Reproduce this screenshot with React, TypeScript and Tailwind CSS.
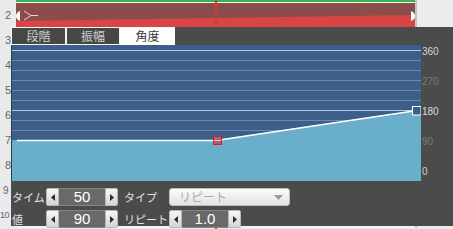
import React from 'react';

const rows = ['3', '4', '5', '6', '7', '8', '9', '10'];
const axis = [
  { label: '360', color: 'text-[#d4d4d4]' },
  { label: '270', color: 'text-[#7a7a7a]' },
  { label: '180', color: 'text-[#dcdcdc]' },
  { label: '90', color: 'text-[#7a7a7a]' },
  { label: '0', color: 'text-[#cfcfcf]' },
];

function Arrow({ dir }: { dir: 'left' | 'right' }) {
  return (
    <svg width="4" height="7" viewBox="0 0 4 7">
      <path d={dir === 'left' ? 'M4 0 L0 3.5 L4 7Z' : 'M0 0 L4 3.5 L0 7Z'} fill="#2b2b2b" />
    </svg>
  );
}

function Spinner({ value }: { value: string }) {
  return (
    <div className="flex h-[18px] shrink-0">
      <div className="w-[13px] flex items-center justify-center rounded-l-[2px] border border-[#b8b8b8] bg-linear-to-b from-[#f7f7f7] to-[#d4d4d4]">
        <Arrow dir="left" />
      </div>
      <div className="w-[46px] flex items-center justify-center border-y border-[#858585] bg-[#696969] text-[15px] text-white font-['Liberation_Sans',sans-serif]">
        {value}
      </div>
      <div className="w-[13px] flex items-center justify-center rounded-r-[2px] border border-[#b8b8b8] bg-linear-to-b from-[#f7f7f7] to-[#d4d4d4]">
        <Arrow dir="right" />
      </div>
    </div>
  );
}

function Chart() {
  const lines = [5, 15, 25, 35, 45, 55, 65, 75, 85];
  return (
    <svg width="410" height="136" viewBox="0 0 410 136" className="block shrink-0">
      <rect x="0" y="0" width="410" height="136" fill="#3d5e89" />
      {lines.map((y) => (
        <line
          key={y}
          x1="0"
          x2="410"
          y1={y + 0.5}
          y2={y + 0.5}
          stroke={y === 5 || y === 65 ? '#b9c5d5' : '#6c88aa'}
          strokeWidth="1"
        />
      ))}
      <polygon points="0,95 205,95 406,65 410,65 410,136 0,136" fill="#6aafca" />
      <polyline points="6,95.5 205,95.5 406,65.5" fill="none" stroke="#ffffff" strokeWidth="1.3" />
      <rect x="202.5" y="91.5" width="8" height="8" fill="#a46478" stroke="#e01b1b" strokeWidth="1" />
      <line x1="203" x2="210" y1="95.5" y2="95.5" stroke="#e6c8d0" strokeWidth="1" />
      <rect x="401.5" y="61.5" width="8.5" height="8.5" fill="#3d5e89" stroke="#ffffff" strokeWidth="1" />
      <rect x="0" y="0" width="1" height="136" fill="#2c3e55" />
    </svg>
  );
}

function Panel() {
  return (
    <div className="absolute left-[11px] top-[27px] w-[442px] h-[199px] bg-[#4b4b4b] flex flex-col font-['Noto_Sans_CJK_JP','Noto_Sans',sans-serif] z-10">
      <div className="h-[18px] flex">
        <div className="flex gap-[2px] bg-[#f4f4f4] pl-px pt-px">
          <div className="w-[53px] h-[16px] bg-[#474747] text-[#d0d0d0] text-[12px] leading-[16px] text-center">段階</div>
          <div className="w-[52px] h-[16px] bg-[#474747] text-[#d0d0d0] text-[12px] leading-[16px] text-center">振幅</div>
          <div className="w-[55px] h-[17px] -ml-[1px] bg-white text-[#3a3a3a] text-[12px] leading-[16px] text-center">角度</div>
        </div>
      </div>
      <div className="flex">
        <Chart />
        <div className="flex flex-col -mt-[9px] pl-px">
          {axis.map((a) => (
            <div key={a.label} className={`h-[30px] flex items-center text-[10px] font-['Liberation_Sans',sans-serif] ${a.color}`}>
              {a.label}
            </div>
          ))}
        </div>
      </div>
      <div className="flex flex-col gap-[4px] pt-[2px] text-[11px] text-[#e2e2e2] whitespace-nowrap">
        <div className="flex items-center h-[18px]">
          <div className="w-[35px] shrink-0 pl-px">タイム</div>
          <Spinner value="50" />
          <div className="w-[51px] shrink-0 pl-[6px]">タイプ</div>
          <div className="w-[121px] shrink-0 h-[18px] flex items-center justify-between rounded-[3px] border border-[#bdbdbd] bg-linear-to-b from-[#fbfbfb] to-[#e2e2e2] pl-[9px] pr-[6px]">
            <span className="text-[#a9a9a9] text-[12px]">リピート</span>
            <svg width="9" height="5" viewBox="0 0 9 5">
              <path d="M0 0 L9 0 L4.5 5Z" fill="#9a9a9a" />
            </svg>
          </div>
        </div>
        <div className="flex items-center h-[18px]">
          <div className="w-[35px] shrink-0 pl-px">値</div>
          <Spinner value="90" />
          <div className="w-[51px] shrink-0 pl-[6px]">リピート</div>
          <Spinner value="1.0" />
        </div>
      </div>
    </div>
  );
}

function Track() {
  return (
    <svg width="399" height="24" viewBox="0 0 399 24" className="block">
      <rect x="0" y="0" width="399" height="24" fill="#8b4d4a" />
      <polygon points="0,18 399,12 399,24 0,24" fill="#d94545" />
      <path d="M4 8 C1 9 0 11 0 13 C0 15 1 17 4 18 Z" fill="#ffffff" />
      <path d="M8 8 L15 12.5 L8 17 M15 12.5 L22 12.5" fill="none" stroke="#e8d6d4" strokeWidth="1" />
      <path d="M395 8 C398 9 399 11 399 13 C399 15 398 17 395 18 Z" fill="#ffffff" />
    </svg>
  );
}

export default function App() {
  return (
    <div className="relative w-[453px] h-[229px] overflow-hidden bg-[#e8eaec] font-['Liberation_Sans',sans-serif]">
      <div className="flex h-[3px]">
        <div className="w-[16px]" />
        <div className="w-[399px] flex flex-col">
          <div className="h-[2px] bg-[#37b556]" />
          <div className="h-px bg-[#f2f2f2]" />
        </div>
        <div className="flex-1 border-l-[2px] border-[#c4c4c4] bg-[#ececec]" />
      </div>
      <div className="flex h-[25px]">
        <div className="w-[16px] flex items-center justify-center text-[11px] text-[#666]">2</div>
        <div className="w-[399px]">
          <Track />
        </div>
        <div className="flex-1 border-l-[2px] border-[#c4c4c4] bg-[#ececec]" />
      </div>
      {rows.map((r) => (
        <div key={r} className="flex h-[25px]">
          <div className={`w-[16px] flex items-center ${r === '10' ? 'text-[9px] tracking-tighter justify-start' : r === '9' ? 'text-[10px] pl-[3px]' : 'text-[11px] justify-center'} text-[#666]`}>
            {r}
          </div>
          <div className="w-[399px] bg-[#f3f3f3]" />
          <div className="flex-1 border-l-[2px] border-[#c4c4c4] bg-[#ececec]" />
        </div>
      ))}
      <div className="absolute left-[215px] top-0 w-[2px] h-[229px] bg-[#cc3a3a]" />
      <Panel />
    </div>
  );
}
